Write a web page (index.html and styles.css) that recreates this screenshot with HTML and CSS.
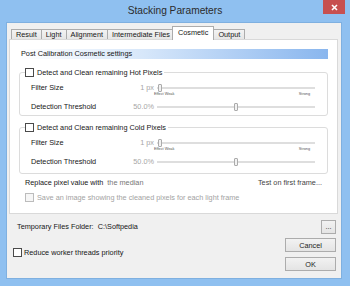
FILE: index.html
```html
<!DOCTYPE html>
<html lang="en">
<head>
    <meta charset="UTF-8">
    <title>Stacking Parameters</title>
    <link rel="stylesheet" href="styles.css">
</head>
<body>
    <div class="window">
        <div class="titlebar">
            <div class="title">Stacking Parameters</div>
            <button class="close">
                <svg width="7" height="7" viewBox="0 0 7 7"><path d="M1 1L6 6M6 1L1 6" stroke="#fff" stroke-width="1.6"/></svg>
            </button>
        </div>

        <div class="client">
            <div class="tabs">
                <div class="tab">Result</div>
                <div class="tab">Light</div>
                <div class="tab">Alignment</div>
                <div class="tab">Intermediate Files</div>
                <div class="tab active">Cosmetic</div>
                <div class="tab">Output</div>
            </div>

            <div class="panel">
                <div class="section-head">Post Calibration Cosmetic settings</div>

                <fieldset class="group">
                    <legend><span class="check"></span>Detect and Clean remaining Hot Pixels</legend>
                    <div class="param">
                        <span class="param-label">Filter Size</span>
                        <span class="param-value">1 px</span>
                        <div class="slider">
                            <div class="track"><span class="thumb" style="left: 1px"></span></div>
                            <div class="scale"><span>Effect Weak</span><span>Strong</span></div>
                        </div>
                    </div>
                    <div class="param">
                        <span class="param-label">Detection Threshold</span>
                        <span class="param-value">50.0%</span>
                        <div class="slider">
                            <div class="track"><span class="thumb" style="left: 49%"></span></div>
                        </div>
                    </div>
                </fieldset>

                <fieldset class="group">
                    <legend><span class="check"></span>Detect and Clean remaining Cold Pixels</legend>
                    <div class="param">
                        <span class="param-label">Filter Size</span>
                        <span class="param-value">1 px</span>
                        <div class="slider">
                            <div class="track"><span class="thumb" style="left: 1px"></span></div>
                            <div class="scale"><span>Effect Weak</span><span>Strong</span></div>
                        </div>
                    </div>
                    <div class="param">
                        <span class="param-label">Detection Threshold</span>
                        <span class="param-value">50.0%</span>
                        <div class="slider">
                            <div class="track"><span class="thumb" style="left: 49%"></span></div>
                        </div>
                    </div>
                </fieldset>

                <div class="replace-row">
                    <span>Replace pixel value with&nbsp; <span class="muted">the median</span></span>
                    <span class="test">Test on first frame...</span>
                </div>
                <div class="check-row disabled"><span class="check"></span>Save an image showing the cleaned pixels for each light frame</div>
            </div>

            <div class="footer">
                <div class="footer-left">
                    <div class="folder">Temporary Files Folder:&nbsp; C:\Softpedia</div>
                    <div class="check-row"><span class="check"></span>Reduce worker threads priority</div>
                </div>
                <div class="footer-right">
                    <button class="btn btn-browse">...</button>
                    <button class="btn">Cancel</button>
                    <button class="btn">OK</button>
                </div>
            </div>
        </div>
    </div>
</body>
</html>
```

FILE: styles.css
```css
body {
    margin: 0;
    font-family: "Liberation Sans", Arial, sans-serif;
    font-size: 7.3px;
    color: #161616;
}

.window {
    width: 350px;
    height: 286px;
    background: #8fc0f0;
    display: flex;
    flex-direction: column;
}

/* Title bar */
.titlebar {
    height: 22px;
    display: grid;
    grid-template-columns: 1fr auto 1fr;
    padding: 0 5px;
}

.title {
    grid-column: 2;
    font-size: 10.2px;
    line-height: 22px;
    color: #2b2b2b;
}

.close {
    grid-column: 3;
    justify-self: end;
    width: 22px;
    height: 14px;
    padding: 0;
    border: none;
    background: #c75050;
    display: flex;
    align-items: center;
    justify-content: center;
}

/* Client area */
.client {
    flex: 1;
    margin: 0 8px 7px 6px;
    border: 1px solid #7fb0e0;
    background: #f0f0f0;
    display: flex;
    flex-direction: column;
}

.tabs {
    display: flex;
    align-items: flex-end;
    margin: 3px 0 0 4px;
    position: relative;
    z-index: 1;
}

.tab {
    height: 9px;
    line-height: 10px;
    padding: 0 4px;
    border: 1px solid #acacac;
    border-bottom: none;
    background: linear-gradient(#f3f3f3, #e6e6e6);
    margin-right: -1px;
}

.tab.active {
    height: 13px;
    line-height: 12px;
    padding: 0 5px;
    margin: 0 -1px -1px -2px;
    background: #fff;
}

.panel {
    height: 175px;
    margin: 0 3px 0 2px;
    padding: 0 9px;
    border: 1px solid #d9d9d9;
    background: #fff;
    box-sizing: border-box;
}

.section-head {
    margin-top: 9px;
    height: 10px;
    line-height: 10px;
    padding-left: 2px;
    background: linear-gradient(to right, #ffffff, #d7e7fa 40%, #89b6ee);
}

/* Group boxes */
.group {
    margin: 9px 0 0;
    padding: 5px 12px 2px 11px;
    border: 1px solid #dcdcdc;
    border-radius: 3px;
    min-width: 0;
}

.group + .group {
    margin-top: 7px;
    padding-bottom: 5px;
}

.group legend {
    margin-left: -6px;
    padding: 0 2px 0 0;
    line-height: 9px;
}

.check {
    display: inline-block;
    width: 7px;
    height: 7px;
    border: 1px solid #4a4a4a;
    background: #fff;
    vertical-align: top;
    margin-right: 3px;
}

.param {
    display: grid;
    grid-template-columns: 1fr 30px 158px;
    column-gap: 3px;
}

.param + .param {
    margin-top: 4px;
}

.param-label,
.param-value {
    line-height: 12px;
}

.param-value {
    text-align: right;
    color: #a6a6a6;
}

.track {
    position: relative;
    height: 2px;
    margin: 5px 0;
    background: #dedede;
}

.scale {
    display: flex;
    justify-content: space-between;
    margin: -2px 5px 0 -3px;
    font-size: 3.8px;
    line-height: 5px;
    color: #555;
}

.thumb {
    position: absolute;
    top: -3px;
    width: 2px;
    height: 6px;
    border: 1px solid #ababab;
    border-radius: 1px;
    background: #f2f2f2;
}

.replace-row {
    display: flex;
    justify-content: space-between;
    margin: 4px 6px 0;
    line-height: 10px;
}

.muted {
    color: #767676;
}

.test {
    color: #444;
}

.check-row {
    display: flex;
    align-items: center;
    margin: 5px 6px 0;
    line-height: 9px;
}

.check-row.disabled {
    color: #a3a3a3;
}

.check-row.disabled .check {
    border-color: #bcbcbc;
    background: #f6f6f6;
}

/* Footer */
.footer {
    display: flex;
    justify-content: space-between;
    padding: 6px 5px 0 6px;
}

.folder {
    margin-left: 4px;
    line-height: 14px;
}

.footer-left .check-row {
    margin: 14px 0 0;
}

.footer-left .check {
    margin-right: 2px;
}

.footer-right {
    display: flex;
    flex-direction: column;
    align-items: flex-end;
}

.btn {
    width: 51px;
    height: 14px;
    padding: 0;
    margin-bottom: 5px;
    border: 1px solid #acacac;
    background: linear-gradient(#f2f2f2, #e4e4e4);
    font-family: inherit;
    font-size: 7.3px;
    color: #1e1e1e;
}

.btn-browse {
    width: 15px;
    margin-bottom: 4px;
    line-height: 10px;
}
```
